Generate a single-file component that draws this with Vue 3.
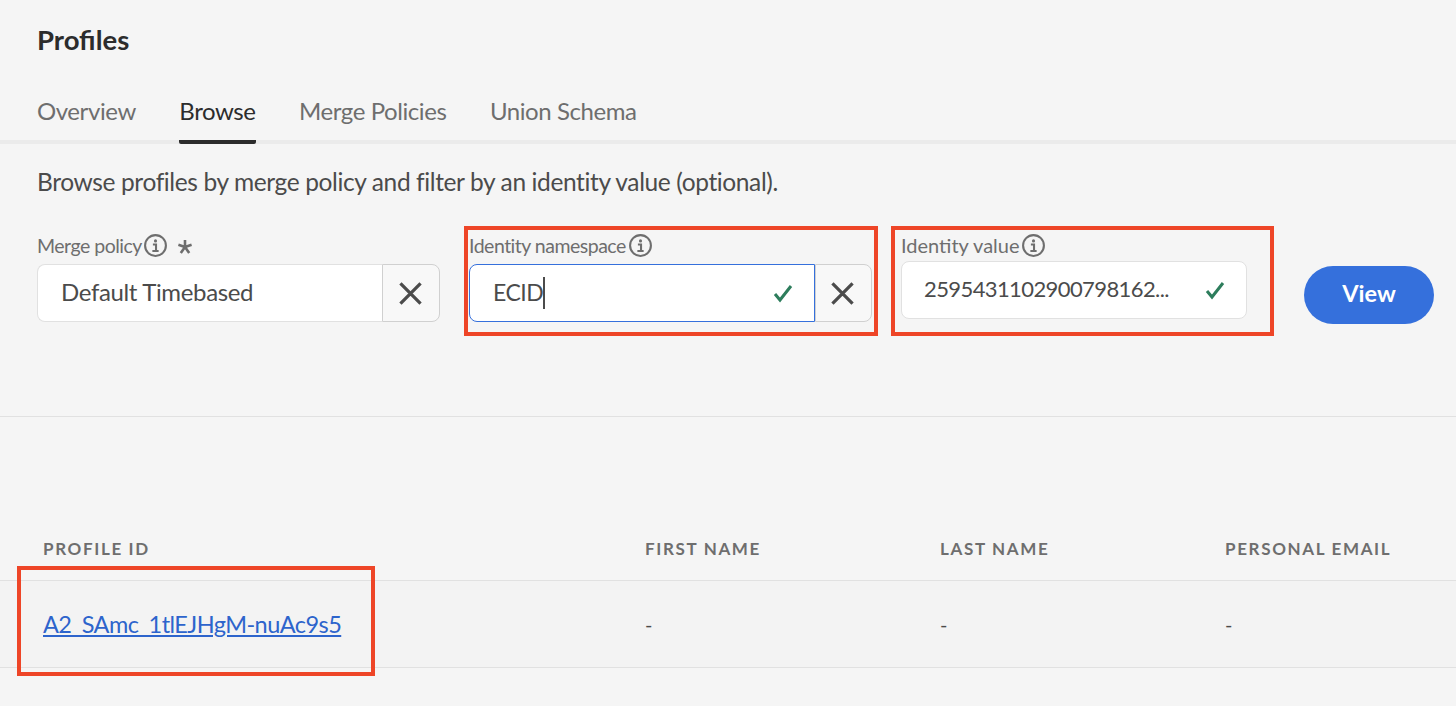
<template>
  <div class="page">
    <h1 class="title">Profiles</h1>

    <div class="tabs">
      <div v-for="tab in tabs" :key="tab" class="tab" :class="{ active: tab === 'Browse' }">{{ tab }}</div>
    </div>

    <p class="intro">Browse profiles by merge policy and filter by an identity value (optional).</p>

    <div class="filters">
      <div class="field">
        <div class="label">
          Merge policy
          <svg class="info" viewBox="0 0 24 24"><circle cx="12" cy="12" r="10" /><circle class="dot" cx="12" cy="7.6" r="1.5" /><path d="M9.5 11h3v6M9 17.2h6" /></svg>
          <svg class="star" viewBox="0 0 16 16"><path d="M8 1v7M8 8l6.6-2.2M8 8L1.4 5.8M8 8l4.2 6M8 8l-4.2 6" /></svg>
        </div>
        <div class="combo">
          <div class="input">Default Timebased</div>
          <button class="clear clear-wide">
            <svg viewBox="0 0 24 24"><path d="M1.5 1.5l21 21M22.5 1.5l-21 21" /></svg>
          </button>
        </div>
      </div>

      <div class="field">
        <div class="label label-ns">
          Identity namespace
          <svg class="info" viewBox="0 0 24 24"><circle cx="12" cy="12" r="10" /><circle class="dot" cx="12" cy="7.6" r="1.5" /><path d="M9.5 11h3v6M9 17.2h6" /></svg>
        </div>
        <div class="combo">
          <div class="input focused">
            <span class="ecid">ECID</span><span class="caret"></span>
            <svg class="check" viewBox="0 0 20 20"><path d="M2 11l5 6L18 3" /></svg>
          </div>
          <button class="clear">
            <svg viewBox="0 0 24 24"><path d="M1.5 1.5l21 21M22.5 1.5l-21 21" /></svg>
          </button>
        </div>
        <div class="mark mark-namespace"></div>
      </div>

      <div class="field field-value">
        <div class="label label-wide">
          Identity value
          <svg class="info" viewBox="0 0 24 24"><circle cx="12" cy="12" r="10" /><circle class="dot" cx="12" cy="7.6" r="1.5" /><path d="M9.5 11h3v6M9 17.2h6" /></svg>
        </div>
        <div class="input solo">
          <span class="value-text">2595431102900798162...</span>
          <svg class="check" viewBox="0 0 20 20"><path d="M2 11l5 6L18 3" /></svg>
        </div>
        <div class="mark mark-value"></div>
      </div>

      <button class="view">View</button>
    </div>

    <div class="divider"></div>

    <div class="table">
      <div class="row head">
        <div v-for="col in columns" :key="col">{{ col }}</div>
      </div>
      <div class="row body">
        <div class="id-cell">
          <a class="link">A2_SAmc_1tlEJHgM-nuAc9s5</a>
          <div class="mark mark-id"></div>
        </div>
        <div>-</div>
        <div>-</div>
        <div>-</div>
      </div>
    </div>
  </div>
</template>

<script setup>
const tabs = ['Overview', 'Browse', 'Merge Policies', 'Union Schema']
const columns = ['PROFILE ID', 'FIRST NAME', 'LAST NAME', 'PERSONAL EMAIL']
</script>

<style>
html, body {
  margin: 0;
  background: #f5f5f5;
}
</style>

<style scoped>
.page {
  height: 706px;
  overflow: hidden;
  background: #f5f5f5;
  font-family: Lato, "Open Sans", sans-serif;
  color: #4b4b4b;
}

.title {
  margin: 0;
  padding: 25px 0 0 37px;
  height: 60px;
  box-sizing: border-box;
  font-size: 27.5px;
  line-height: 30px;
  font-weight: 700;
  color: #2c2c2c;
}

.tabs {
  display: flex;
  gap: 43.5px;
  height: 84px;
  padding-left: 37px;
  border-bottom: 4px solid #ebebeb;
  box-sizing: border-box;
}

.tab {
  margin-top: 34px;
  height: 50px;
  font-size: 24px;
  line-height: 33px;
  letter-spacing: -0.42px;
  color: #6e6e6e;
  box-sizing: border-box;
}

.tab.active {
  color: #2c2c2c;
  border-bottom: 4px solid #2c2c2c;
  border-radius: 0 0 2px 2px;
}

.intro {
  margin: 0;
  padding: 21px 0 0 37px;
  height: 82px;
  box-sizing: border-box;
  font-size: 24.5px;
  line-height: 34px;
  letter-spacing: -0.38px;
}

.filters {
  display: flex;
  align-items: flex-start;
  gap: 29px;
  padding-left: 37px;
  height: 190px;
  box-sizing: border-box;
}

.field {
  position: relative;
  width: 403px;
}

.field-value {
  width: 346px;
}

.label {
  display: flex;
  align-items: center;
  height: 38px;
  font-size: 19.5px;
  letter-spacing: -0.5px;
  color: #6e6e6e;
}

.label-ns .info {
  margin-left: 2px;
}

.label-wide {
  font-size: 20px;
  letter-spacing: 0;
}

.info {
  width: 25px;
  height: 25px;
  margin-left: 1px;
  fill: none;
  stroke: #6e6e6e;
  stroke-width: 2;
}

.info .dot {
  fill: #6e6e6e;
  stroke: none;
}

.star {
  width: 16px;
  height: 16px;
  margin: 4px 0 0 9px;
  fill: none;
  stroke: #6e6e6e;
  stroke-width: 2.6;
}

.combo {
  display: flex;
  height: 58px;
}

.input {
  position: relative;
  flex: 1;
  display: flex;
  align-items: center;
  padding: 0 0 3px 23px;
  background: #fff;
  border: 1px solid #e1e1e1;
  border-right: none;
  border-radius: 8px 0 0 8px;
  font-size: 24px;
  letter-spacing: -0.35px;
  box-sizing: border-box;
}

.input.focused {
  border: 1px solid #3570dc;
}

.input.solo {
  height: 58px;
  margin-top: -3px;
  padding-left: 22px;
  border-right: 1px solid #e1e1e1;
  border-radius: 8px;
}

.ecid {
  font-size: 23px;
  letter-spacing: -0.5px;
}

.value-text {
  font-size: 22px;
  letter-spacing: -0.6px;
}

.caret {
  width: 2px;
  height: 32px;
  margin-top: 3px;
  background: #4b4b4b;
}

.check {
  position: absolute;
  right: 21px;
  top: 18px;
  width: 20px;
  height: 20px;
  fill: none;
  stroke: #2d7d5c;
  stroke-width: 3;
}

.clear {
  width: 57px;
  padding: 0;
  display: flex;
  align-items: center;
  justify-content: center;
  background: #f8f8f8;
  border: 1px solid #d0d0d0;
  border-radius: 0 8px 8px 0;
}

.clear-wide {
  width: 58px;
}

.clear svg {
  width: 23px;
  height: 23px;
  margin-right: 2px;
  fill: none;
  stroke: #4b4b4b;
  stroke-width: 3.4;
}

.view {
  margin: 40px 0 0 28px;
  width: 130px;
  height: 58px;
  padding: 0 0 4px;
  border: none;
  border-radius: 29px;
  background: #3570dc;
  color: #fff;
  font-family: inherit;
  font-size: 23.5px;
  font-weight: 700;
}

.divider {
  height: 1px;
  background: #e1e1e1;
}

.table {
  margin-top: 113px;
}

.row {
  display: grid;
  grid-template-columns: 602px 295px 285px 1fr;
  padding-left: 43px;
  box-sizing: border-box;
}

.head {
  height: 51px;
  padding-top: 7px;
  font-size: 17px;
  line-height: 23px;
  font-weight: 700;
  letter-spacing: 1.65px;
  color: #6e6e6e;
  border-bottom: 1px solid #e1e1e1;
}

.body {
  height: 87px;
  align-items: center;
  font-size: 20px;
  background: #f3f3f3;
  border-bottom: 1px solid #e1e1e1;
}

.id-cell {
  position: relative;
}

.link {
  font-size: 23.5px;
  letter-spacing: -0.55px;
  color: #2d64cc;
  text-decoration: underline;
}

/* red callout frames drawn over the screenshot */
.mark {
  position: absolute;
  border: 4px solid #ee4527;
  box-sizing: border-box;
  pointer-events: none;
}

.mark-namespace {
  left: -5px;
  top: 0;
  width: 414px;
  height: 110px;
}

.mark-value {
  left: -10px;
  top: 0;
  width: 383px;
  height: 110px;
}

.mark-id {
  left: -26px;
  top: -44px;
  width: 358px;
  height: 110px;
}
</style>
